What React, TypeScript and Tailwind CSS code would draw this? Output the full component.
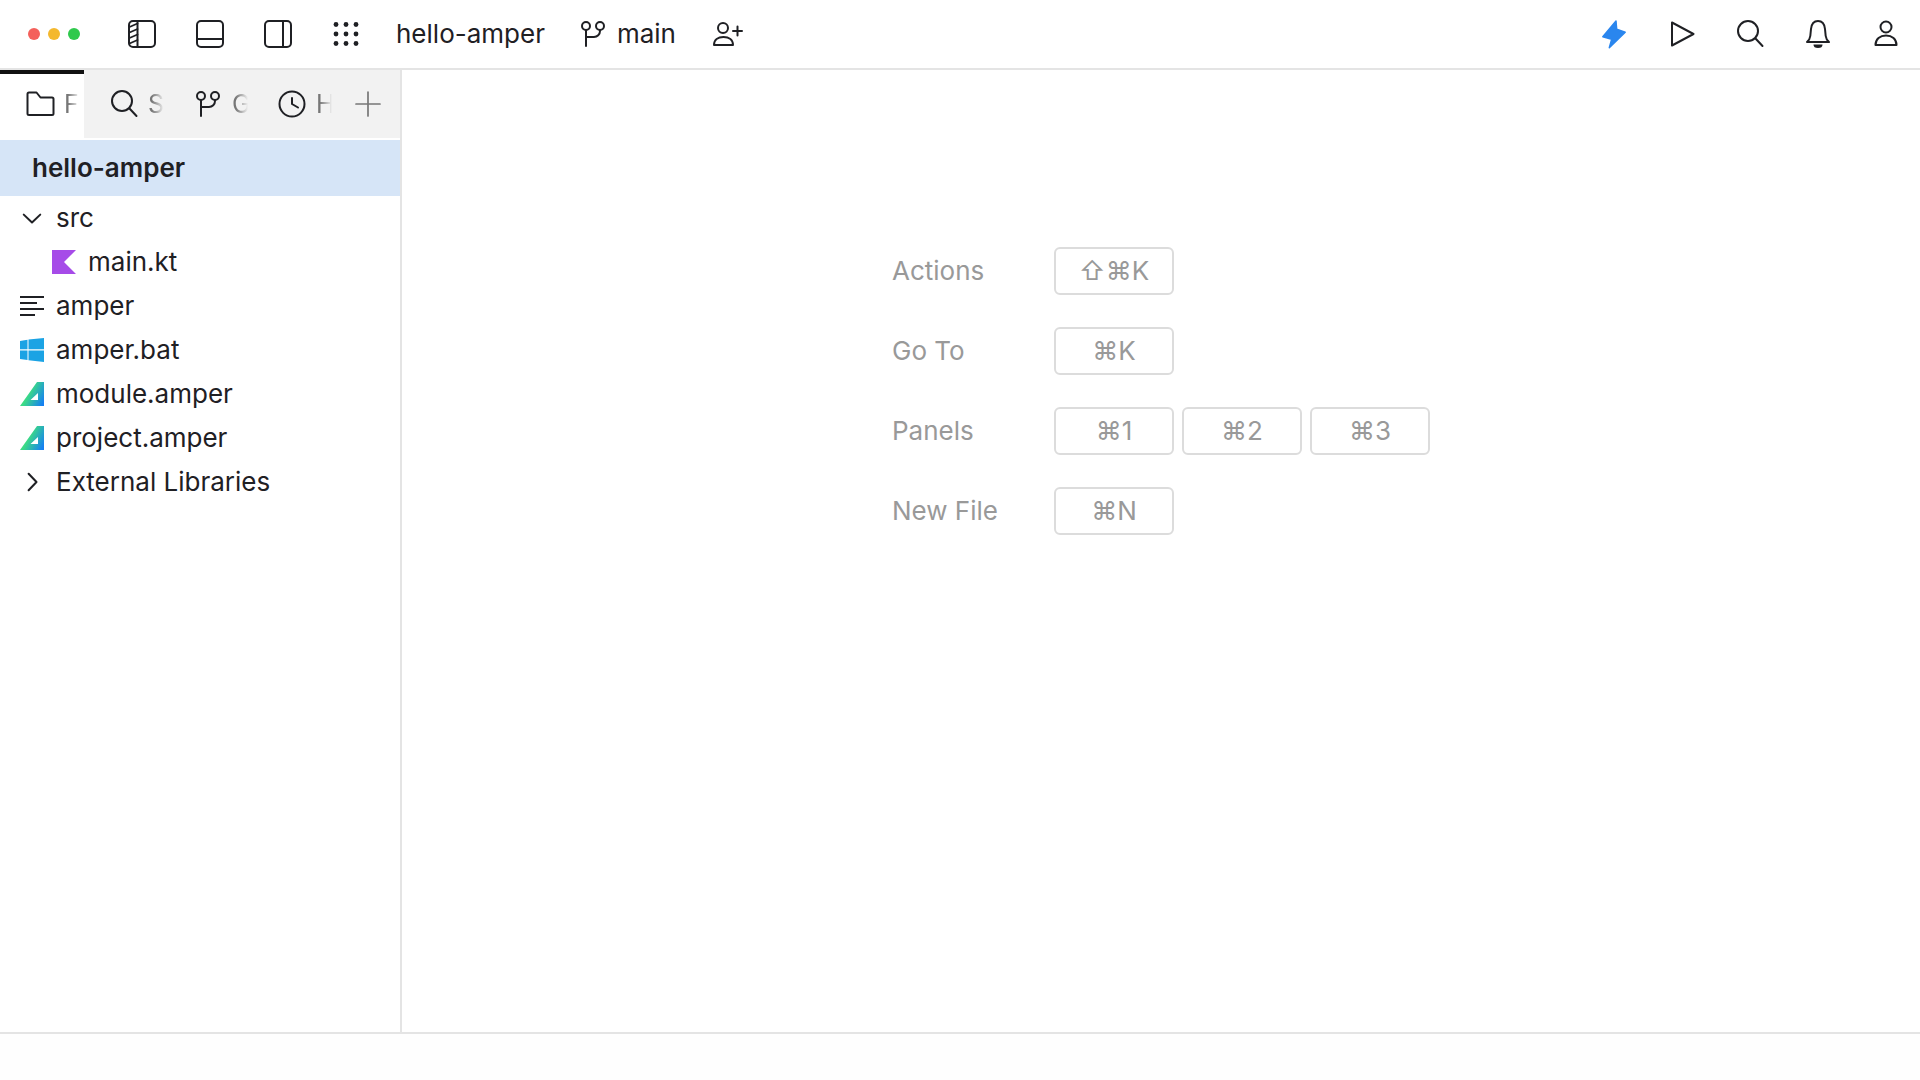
/**
 * @file IDE 窗口空白页
 * @description 顶栏、文件树和快捷键提示
 */

import type { ReactNode } from 'react';

/** 32x32 的线条图标外壳 */
function Icon({ children, className = 'w-8 h-8' }: { children: ReactNode; className?: string }) {
  return (
    <svg
      viewBox="0 0 32 32"
      fill="none"
      stroke="currentColor"
      strokeWidth="2"
      strokeLinecap="round"
      strokeLinejoin="round"
      className={`${className} flex-shrink-0`}
    >
      {children}
    </svg>
  );
}

const PanelLeft = () => (
  <Icon>
    <rect x="3" y="3" width="26" height="26" rx="4" />
    <path d="M11.5 3v26" />
    <path strokeWidth="1.8" d="M3.5 9l8-3.5M3.5 14.500l8-3.5M3.500 20l8-3.500M3.500 25.500l8-3.500" />
  </Icon>
);
const PanelBottom = () => (
  <Icon>
    <rect x="3" y="3" width="26" height="26" rx="4" />
    <path d="M3 21h26" />
  </Icon>
);
const PanelRight = () => (
  <Icon>
    <rect x="3" y="3" width="26" height="26" rx="4" />
    <path d="M21 3v26" />
  </Icon>
);
const Grid = () => (
  <Icon>
    <g fill="currentColor" stroke="none">
      {[6, 16, 26].map((x) =>
        [6.5, 16, 25.5].map((y) => <circle key={`${x}-${y}`} cx={x} cy={y} r="2.4" />),
      )}
    </g>
  </Icon>
);
const Branch = () => (
  <Icon>
    <circle cx="9" cy="8" r="4" />
    <circle cx="23" cy="8" r="4" />
    <path d="M9 12V28M23 12v1a6 6 0 0 1-6 6H9" />
  </Icon>
);
const UserPlus = () => (
  <Icon>
    <circle cx="12" cy="10" r="5" />
    <path d="M3 27c0-5 4-8 9.500-8s9.500 3 9.500 8z" />
    <path d="M26.500 8.500v9M22 13h9" />
  </Icon>
);
const Bolt = () => (
  <svg viewBox="0 0 32 32" className="w-8 h-8" fill="#2a86ee" stroke="#2a86ee" strokeWidth="1.5" strokeLinejoin="round">
    <path d="M18 3L4.800 18.700L13.700 21.300L11.300 29.800L27.200 14.300L18.700 11.300Z" />
  </svg>
);
const Play = () => (
  <Icon>
    <path d="M6 4.500L27.500 16L6 27.500Z" />
  </Icon>
);
const Search = () => (
  <Icon>
    <circle cx="14" cy="13" r="10" />
    <path d="M21.500 20.500l7 7.500" />
  </Icon>
);
const Bell = () => (
  <Icon>
    <path d="M5 24c1.800-1.500 3-3.500 3.300-6L9 11c.5-5 3.300-8 7-8s6.500 3 7 8l.7 7c.3 2.500 1.500 4.500 3.300 6z" />
    <path fill="currentColor" stroke="none" d="M11.500 26.500h9a4.500 3.500 0 0 1-9 0z" />
  </Icon>
);
const User = () => (
  <Icon>
    <circle cx="16" cy="9" r="5.500" />
    <path d="M5.500 27c0-6 4.500-9.500 10.500-9.500S26.500 21 26.500 27z" />
  </Icon>
);
const Folder = () => (
  <Icon>
    <path d="M3.500 6c0-1 .5-1.500 1.500-1.500h7.500l4 5H28c1 0 1.500.5 1.500 1.500v14.500c0 1-.5 1.500-1.500 1.500H5c-1 0-1.500-.5-1.500-1.500z" />
  </Icon>
);
const Clock = () => (
  <Icon>
    <circle cx="16" cy="16" r="12.500" />
    <path d="M16 10v6l6 3.500" />
  </Icon>
);

const Kotlin = () => (
  <svg viewBox="0 0 24 24" className="w-6 h-6 flex-shrink-0">
    <path fill="#a64be8" d="M0 0H24L12 12L24 24H0Z" />
  </svg>
);
const Lines = () => (
  <svg viewBox="0 0 24 24" className="w-6 h-6 flex-shrink-0" stroke="#1f2024" strokeWidth="1.8">
    <path d="M0 3H24M0 9H17M0 15H24M0 21H15" />
  </svg>
);
const Windows = () => (
  <svg viewBox="0 0 24 24" className="w-6 h-6 flex-shrink-0" fill="#1ba3e4">
    <path d="M0 3L7.500 1.800V11.300H0ZM8.500 1.600L24 0V11.300H8.500ZM0 12.500H7.500V22L0 21ZM8.500 12.500H24V24L8.500 22.200Z" />
  </svg>
);
const Amper = ({ id }: { id: string }) => (
  <svg viewBox="0 0 24 24" className="w-6 h-6 flex-shrink-0">
    <defs>
      <linearGradient id={id} x1="0" y1="0.3" x2="1" y2="0.8">
        <stop offset="0.35" stopColor="#3cdc84" />
        <stop offset="1" stopColor="#1580f2" />
      </linearGradient>
    </defs>
    <path fill={`url(#${id})`} fillRule="evenodd" d="M17 0H24V24H0ZM18 11L10.500 18H18Z" />
  </svg>
);

/** 标签页：图标 + 渐隐的标题 */
function PanelTab({ icon, label, active, iconClass }: { icon: ReactNode; label: string; active?: boolean; iconClass: string }) {
  return (
    <div className={`relative flex h-full w-[84px] items-center ${iconClass} ${active ? 'bg-white' : ''}`}>
      {active && <div className="absolute left-0 top-0 h-1 w-full bg-[#111111]" />}
      {icon}
      <span className="ml-[8px] w-[16px] overflow-hidden text-[25px] leading-none text-[#777777] [mask-image:linear-gradient(to_right,black_25%,transparent)]">
        {label}
      </span>
    </div>
  );
}

function TreeRow({ icon, label, inset = 'pl-5' }: { icon: ReactNode; label: string; inset?: string }) {
  return (
    <div className={`flex h-[44px] items-center gap-3 ${inset}`}>
      {icon}
      <span className="pb-[1px]">{label}</span>
    </div>
  );
}

function Key({ children }: { children: ReactNode }) {
  return (
    <div className="flex h-12 w-[120px] items-center justify-center rounded-[6px] border-2 border-[#dcdcdc] pb-[2px] text-[26px] text-[#999999]">
      {children}
    </div>
  );
}

function Shortcut({ label, keys }: { label: string; keys: string[] }) {
  return (
    <div className="flex items-center gap-2">
      <span className="w-[154px] pb-[2px] text-[26px] text-[#999999]">{label}</span>
      {keys.map((k) => (
        <Key key={k}>{k}</Key>
      ))}
    </div>
  );
}

export default function App() {
  return (
    <div className="flex h-[1080px] w-[1920px] flex-col overflow-hidden bg-white font-[Inter,sans-serif] text-[26px] text-[#1f2024]">
      {/* 顶栏 */}
      <header className="flex h-[70px] flex-shrink-0 items-center border-b-2 border-[#e4e4e4]">
        <div className="flex w-[108px] gap-2 pl-7">
          <div className="h-3 w-3 rounded-full bg-[#f4605b]" />
          <div className="h-3 w-3 rounded-full bg-[#f4b82e]" />
          <div className="h-3 w-3 rounded-full bg-[#2fc94c]" />
        </div>
        {[<PanelLeft key="l" />, <PanelBottom key="b" />, <PanelRight key="r" />, <Grid key="g" />].map((icon, i) => (
          <div key={i} className="flex w-[68px] justify-center">
            {icon}
          </div>
        ))}
        <span className="ml-4 pb-[2px]">hello-amper</span>
        <div className="ml-8 flex items-center gap-2">
          <Branch />
          <span className="pb-[2px]">main</span>
        </div>
        <div className="ml-[35px]">
          <UserPlus />
        </div>
        <div className="ml-auto flex">
          {[<Bolt key="z" />, <Play key="p" />, <Search key="s" />, <Bell key="n" />, <User key="u" />].map((icon, i) => (
            <div key={i} className="flex w-[68px] justify-center">
              {icon}
            </div>
          ))}
        </div>
      </header>

      <div className="flex min-h-0 flex-1">
        {/* 侧边栏 */}
        <aside className="w-[402px] flex-shrink-0 border-r-2 border-[#e4e4e4]">
          <div className="flex h-[68px] items-center bg-[#f2f2f2] text-[#1f2024]">
            <PanelTab active icon={<Folder />} label="Files" iconClass="pl-6" />
            <PanelTab icon={<Search />} label="Search" iconClass="pl-6" />
            <PanelTab icon={<Branch />} label="Git" iconClass="pl-6" />
            <PanelTab icon={<Clock />} label="History" iconClass="pl-6" />
            <div className="ml-[16px] text-[#777777]">
              <Icon>
                <path strokeWidth="1.7" d="M16 4v24M4 16h24" />
              </Icon>
            </div>
          </div>
          <div className="mt-[2px] flex h-14 items-center bg-[#d6e5f7] pb-[2px] pl-8 font-semibold">hello-amper</div>
          <div>
            <TreeRow
              label="src"
              icon={
                <Icon className="h-6 w-6">
                  <path d="M5 11.500L16 22L27 11.500" strokeWidth="2.7" />
                </Icon>
              }
            />
            <TreeRow icon={<Kotlin />} label="main.kt" inset="pl-[52px]" />
            <TreeRow icon={<Lines />} label="amper" />
            <TreeRow icon={<Windows />} label="amper.bat" />
            <TreeRow icon={<Amper id="amper-module" />} label="module.amper" />
            <TreeRow icon={<Amper id="amper-project" />} label="project.amper" />
            <TreeRow
              label="External Libraries"
              icon={
                <Icon className="h-6 w-6">
                  <path d="M11.500 5L22 16L11.500 27" strokeWidth="2.7" />
                </Icon>
              }
            />
          </div>
        </aside>

        {/* 快捷键提示 */}
        <main className="flex flex-1 flex-col gap-8 pl-[490px] pt-[177px]">
          <Shortcut label="Actions" keys={['⇧⌘K']} />
          <Shortcut label="Go To" keys={['⌘K']} />
          <Shortcut label="Panels" keys={['⌘1', '⌘2', '⌘3']} />
          <Shortcut label="New File" keys={['⌘N']} />
        </main>
      </div>

      {/* 状态栏 */}
      <footer className="h-12 flex-shrink-0 border-t-2 border-[#e4e4e4] bg-[#fefefe]" />
    </div>
  );
}
